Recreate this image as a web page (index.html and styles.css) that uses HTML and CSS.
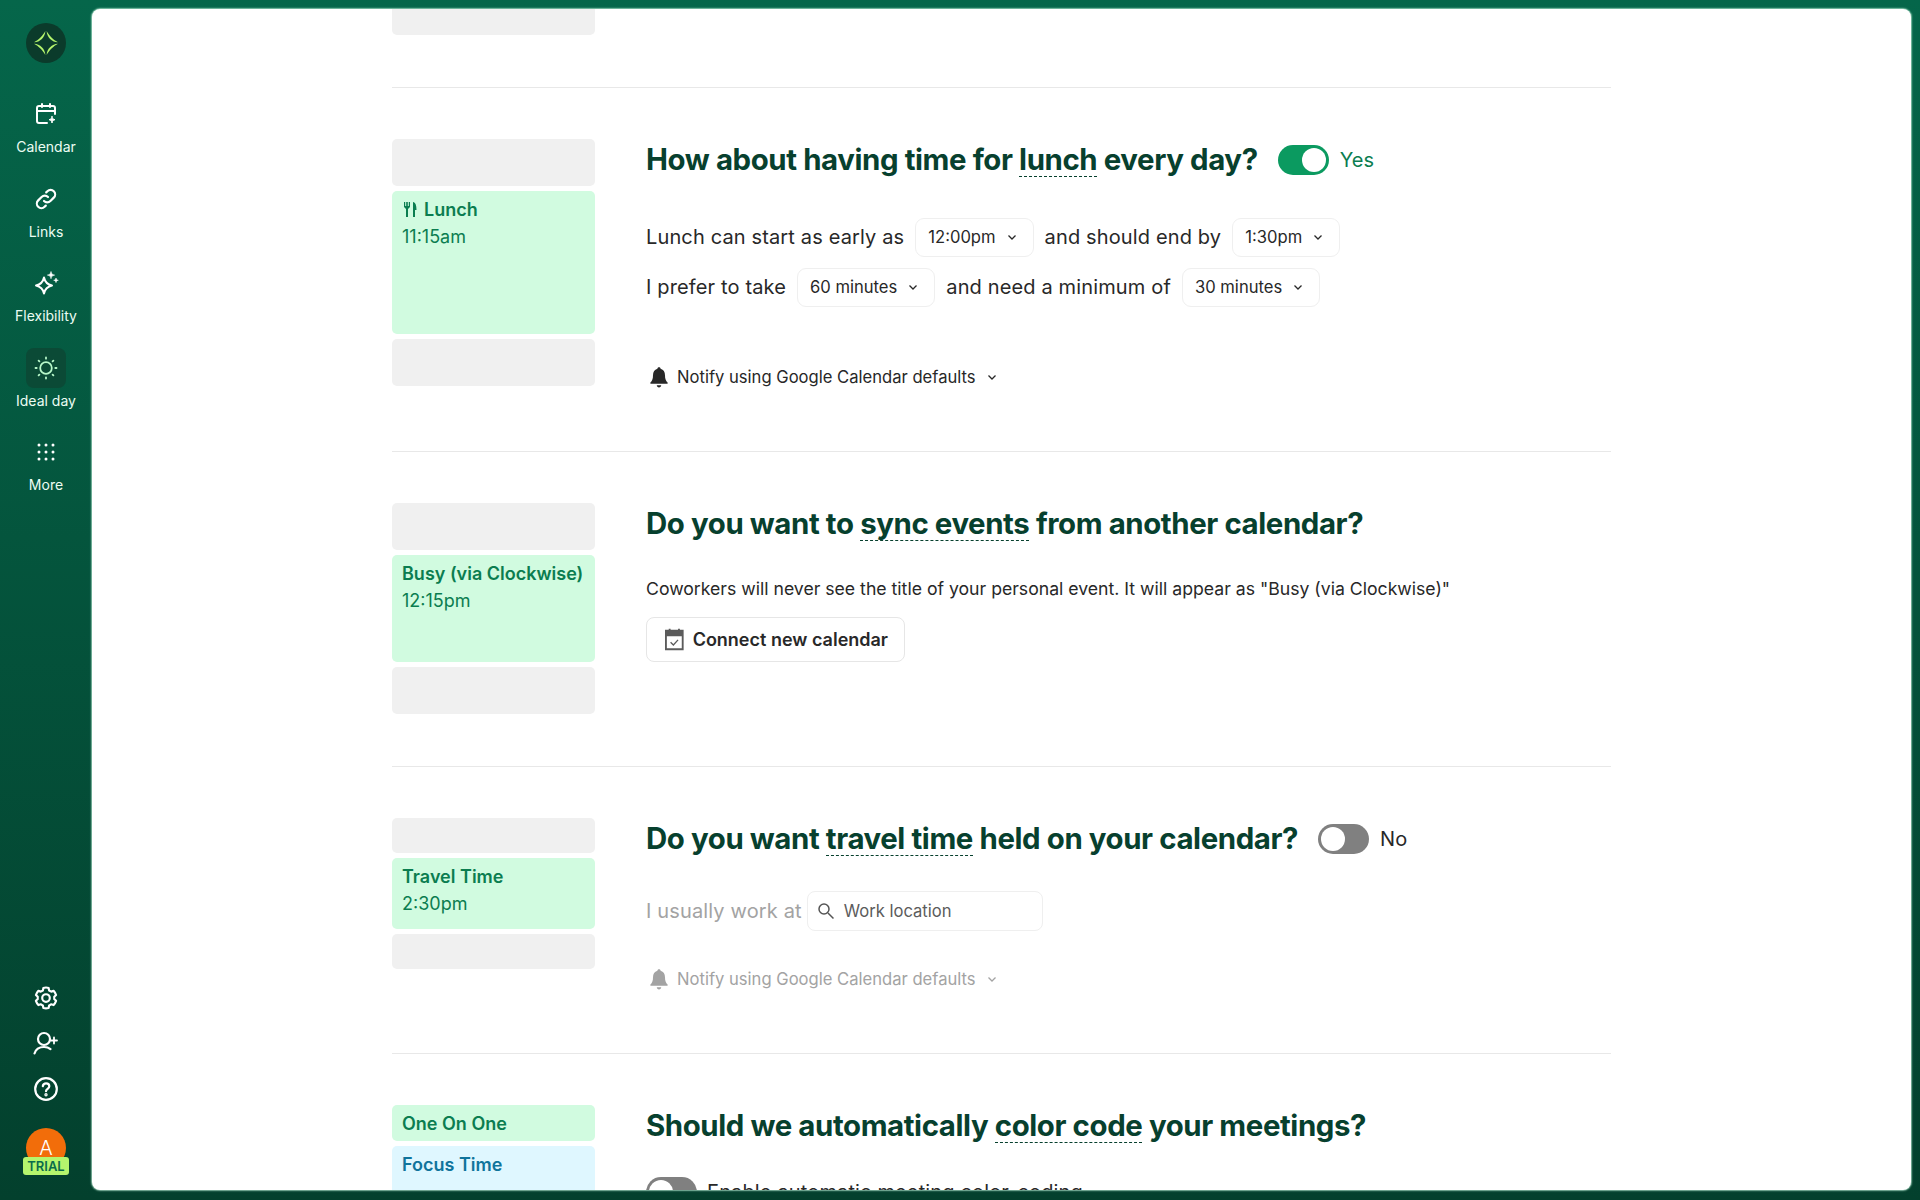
FILE: index.html
```html
<!DOCTYPE html>
<html lang="en">
<head>
<meta charset="utf-8">
<title>Ideal day</title>
<link rel="stylesheet" href="styles.css">
</head>
<body>
<svg class="defs" width="0" height="0" aria-hidden="true">
  <symbol id="chev" viewBox="0 0 12 12"><path d="M2.5 4.5 6 8l3.5-3.5" fill="none" stroke="currentColor" stroke-width="1.3"/></symbol>
  <symbol id="bell" viewBox="0 0 20 24"><path d="M10 2.2c1 0 1.6.7 1.6 1.6 3 .8 4.4 3.3 4.4 6.4 0 3.600.8 5.600 2.600 7.200v1.400H1.400v-1.400C3.200 15.800 4 13.800 4 10.200c0-3.100 1.400-5.600 4.400-6.400 0-.9.600-1.600 1.600-1.600ZM7.800 20.200h4.400c0 1.300-1 2.200-2.200 2.200s-2.200-.9-2.200-2.200Z" fill="currentColor"/></symbol>
</svg>
<div class="app">
  <aside class="sidebar">
    <div class="logo">
      <svg width="26" height="26" viewBox="0 0 26 26" fill="#b5f56d"><path d="M13.700 1C16 5.500 20.500 10 25 12.300 19 12.300 13.700 7 13.700 1Z"/><path d="M25 13.700C20.500 16 16 20.500 13.700 25 13.700 19 19 13.700 25 13.700Z"/><path d="M12.300 25C10 20.500 5.500 16 1 13.700 7 13.700 12.300 19 12.300 25Z"/><path d="M1 12.300C5.500 10 10 5.500 12.300 1 12.300 7 7 12.300 1 12.300Z"/></svg>
    </div>
    <nav class="nav">
      <a class="nav-item">
        <span class="nav-icon"><svg width="24" height="24" viewBox="0 0 24 24" fill="none" stroke="#fff" stroke-width="2" stroke-linecap="round" stroke-linejoin="round"><path d="M13 21H5a2 2 0 0 1-2-2V6a2 2 0 0 1 2-2h14a2 2 0 0 1 2 2v6"/><path d="M3 9h18M8 2v3M16 2v3"/><path d="M18 14.500c.3 2 1 2.800 3 3.200-2 .4-2.700 1.200-3 3.300-.3-2.100-1-2.900-3-3.300 2-.4 2.700-1.200 3-3.200Z" fill="#fff" stroke-width="1"/></svg></span>
        <span class="nav-label">Calendar</span>
      </a>
      <a class="nav-item">
        <span class="nav-icon"><svg width="24" height="24" viewBox="0 0 24 24" fill="none" stroke="#fff" stroke-width="2.200" stroke-linecap="round" stroke-linejoin="round"><path d="M10 14a4.500 4.500 0 0 0 6.400 0l3.400-3.400a4.500 4.500 0 0 0-6.400-6.400l-1.200 1.200"/><path d="M14 10a4.500 4.500 0 0 0-6.400 0l-3.400 3.400a4.500 4.500 0 0 0 6.400 6.400l1.200-1.200"/></svg></span>
        <span class="nav-label">Links</span>
      </a>
      <a class="nav-item">
        <span class="nav-icon"><svg width="26" height="26" viewBox="0 0 26 26" fill="none" stroke="#fff" stroke-width="2" stroke-linejoin="round"><path d="M11 7.500c1 4.700 3.300 7 8 8-4.700 1-7 3.300-8 8-1-4.700-3.300-7-8-8 4.700-1 7-3.300 8-8Z"/><path d="M18 1.500c.4 2.400 1.200 3.200 3.600 3.600-2.400.4-3.200 1.200-3.600 3.600-.4-2.400-1.200-3.200-3.600-3.600 2.400-.4 3.200-1.200 3.600-3.600ZM23 8c.3 1.500.8 2 2.300 2.300-1.500.3-2 .8-2.300 2.300-.3-1.500-.8-2-2.300-2.300 1.500-.3 2-.8 2.300-2.300Z" fill="#fff" stroke="#fff" stroke-width=".6"/></svg></span>
        <span class="nav-label">Flexibility</span>
      </a>
      <a class="nav-item">
        <span class="nav-icon nav-icon-active"><svg width="26" height="26" viewBox="0 0 26 26" fill="none" stroke="#b7f7c9" stroke-width="1.800" stroke-linecap="round"><circle cx="13" cy="13" r="5.800"/><path d="M13 2.500v1.200M13 22.300v1.200M2.500 13h1.200M22.300 13h1.200M5.600 5.600l.8.8M19.600 19.600l.8.8M5.600 20.400l.8-.8M19.600 6.400l.8-.8"/></svg></span>
        <span class="nav-label">Ideal day</span>
      </a>
      <a class="nav-item">
        <span class="nav-icon"><svg width="20" height="20" viewBox="0 0 20 20" fill="#fff"><circle cx="3" cy="3" r="1.500"/><circle cx="10" cy="3" r="1.500"/><circle cx="17" cy="3" r="1.500"/><circle cx="3" cy="10" r="1.500"/><circle cx="10" cy="10" r="1.500"/><circle cx="17" cy="10" r="1.500"/><circle cx="3" cy="17" r="1.500"/><circle cx="10" cy="17" r="1.500"/><circle cx="17" cy="17" r="1.500"/></svg></span>
        <span class="nav-label">More</span>
      </a>
    </nav>
    <div class="side-bottom">
      <svg class="side-tool" width="26" height="26" viewBox="0 0 24 24" fill="none" stroke="#fff" stroke-width="2" stroke-linejoin="round"><circle cx="12" cy="12" r="3.500"/><path d="M12 2.300c.9 0 1.700.1 2.400.4l.5 2.300c.7.300 1.300.6 1.800 1.100l2.300-.7c1 1.100 1.800 2.500 2.300 3.900l-1.700 1.600c.1.700.1 1.400 0 2.100l1.700 1.600c-.5 1.400-1.300 2.800-2.300 3.900l-2.300-.7c-.5.500-1.100.8-1.800 1.100l-.5 2.300c-1.500.4-3.300.4-4.800 0l-.5-2.300c-.7-.3-1.300-.6-1.800-1.100l-2.300.7c-1-1.100-1.800-2.500-2.300-3.900l1.700-1.600c-.1-.7-.1-1.400 0-2.100L2.700 9.300c.5-1.400 1.300-2.800 2.300-3.900l2.300.7c.5-.5 1.100-.8 1.800-1.100l.5-2.300c.7-.3 1.500-.4 2.400-.4Z"/></svg>
      <svg class="side-tool" width="26" height="26" viewBox="0 0 26 26" fill="none" stroke="#fff" stroke-width="2.200" stroke-linecap="round"><circle cx="11" cy="9" r="6"/><path d="M1.500 23.500c1.200-4.200 4.700-6.500 9.500-6.500 2.600 0 4.800.7 6.500 2.100"/><path d="M21 7.500v6M18 10.500h6" stroke-width="1.800"/></svg>
      <svg class="side-tool" width="26" height="26" viewBox="0 0 26 26" fill="none" stroke="#fff" stroke-width="2.200" stroke-linecap="round"><circle cx="13" cy="13" r="10.800"/><path d="M9.800 10.200c.3-1.800 1.600-2.800 3.300-2.800 1.900 0 3.200 1.200 3.200 2.800 0 2.500-3.300 2.600-3.300 5"/><circle cx="13" cy="18.800" r=".6" fill="#fff"/></svg>
      <div class="avatar">
        <span class="avatar-letter">A</span>
        <span class="trial">TRIAL</span>
      </div>
    </div>
  </aside>

  <main class="panel">
    <section class="section section-clip">
      <div class="cal"><div class="slot slot-top"></div></div>
    </section>

    <section class="section">
      <div class="cal">
        <div class="slot slot-47"></div>
        <div class="event event-lunch">
          <div class="event-title">
            <svg class="fork" width="13" height="15" viewBox="0 0 13 15" fill="currentColor"><path d="M0 0h1.200v4h1V0h1.600v4h1V0H6v5L4 7v8H2V7L0 5ZM9 0c2.500.5 3.500 3 3.500 8H11v7H9Z"/></svg>
            Lunch
          </div>
          <div class="event-time">11:15am</div>
        </div>
        <div class="slot slot-47"></div>
      </div>
      <div class="detail">
        <div class="heading-row">
          <h2 class="heading">How about having time for <span class="dotted">lunch</span> every day?</h2>
          <span class="toggle toggle-on"><span class="knob"></span></span>
          <span class="toggle-label toggle-label-on">Yes</span>
        </div>
        <div class="line line-first">
          <span>Lunch can start as early as</span>
          <span class="pill">12:00pm <svg class="chev"><use href="#chev"/></svg></span>
          <span>and should end by</span>
          <span class="pill">1:30pm <svg class="chev"><use href="#chev"/></svg></span>
        </div>
        <div class="line line-second">
          <span>I prefer to take</span>
          <span class="pill">60 minutes <svg class="chev"><use href="#chev"/></svg></span>
          <span>and need a minimum of</span>
          <span class="pill">30 minutes <svg class="chev"><use href="#chev"/></svg></span>
        </div>
        <div class="notify notify-lunch">
          <svg class="bell"><use href="#bell"/></svg>
          <span>Notify using Google Calendar defaults</span>
          <svg class="chev"><use href="#chev"/></svg>
        </div>
      </div>
    </section>

    <section class="section">
      <div class="cal">
        <div class="slot slot-47"></div>
        <div class="event event-busy">
          <div class="event-title">Busy (via Clockwise)</div>
          <div class="event-time">12:15pm</div>
        </div>
        <div class="slot slot-47"></div>
      </div>
      <div class="detail">
        <div class="heading-row">
          <h2 class="heading">Do you want to <span class="dotted">sync events</span> from another calendar?</h2>
        </div>
        <p class="note">Coworkers will never see the title of your personal event. It will appear as "Busy (via Clockwise)"</p>
        <button class="connect" type="button">
          <svg width="20" height="24" viewBox="0 0 20 24"><path d="M1 3h18v20H1Z" fill="none" stroke="#5b5b5b" stroke-width="2"/><path d="M1 3h18v6H1ZM4 1h2v3H4ZM14 1h2v3h-2Z" fill="#5b5b5b"/><path d="M6 15.500 9 18.500 14 13" fill="none" stroke="#5b5b5b" stroke-width="1.400"/></svg>
          Connect new calendar
        </button>
      </div>
    </section>

    <section class="section">
      <div class="cal">
        <div class="slot slot-35"></div>
        <div class="event event-travel">
          <div class="event-title">Travel Time</div>
          <div class="event-time">2:30pm</div>
        </div>
        <div class="slot slot-35"></div>
      </div>
      <div class="detail">
        <div class="heading-row">
          <h2 class="heading">Do you want <span class="dotted">travel time</span> held on your calendar?</h2>
          <span class="toggle toggle-off"><span class="knob"></span></span>
          <span class="toggle-label">No</span>
        </div>
        <div class="line line-travel">
          <span class="muted">I usually work at</span>
          <span class="search">
            <svg width="18" height="18" viewBox="0 0 18 18" fill="none" stroke="#555" stroke-width="1.500"><circle cx="7" cy="7" r="5"/><path d="m11 11 5.500 5.500"/></svg>
            Work location
          </span>
        </div>
        <div class="notify notify-off">
          <svg class="bell"><use href="#bell"/></svg>
          <span>Notify using Google Calendar defaults</span>
          <svg class="chev"><use href="#chev"/></svg>
        </div>
      </div>
    </section>

    <section class="section">
      <div class="cal">
        <div class="event event-one">
          <div class="event-title">One On One</div>
        </div>
        <div class="event event-focus">
          <div class="event-title">Focus Time</div>
        </div>
      </div>
      <div class="detail">
        <div class="heading-row">
          <h2 class="heading">Should we automatically <span class="dotted">color code</span> your meetings?</h2>
        </div>
        <div class="color-line">
          <span class="toggle toggle-off"><span class="knob"></span></span>
          <span>Enable automatic meeting color-coding</span>
        </div>
      </div>
    </section>
  </main>
</div>
</body>
</html>
```
FILE: styles.css
```css
* { box-sizing: border-box; }
html, body { margin: 0; height: 100%; }
body {
  font-family: Inter, "Liberation Sans", sans-serif;
  color: #282828;
  background: linear-gradient(180deg, #05664a 0%, #03402d 100%);
  overflow: hidden;
}
.defs { position: absolute; }
.app { display: flex; height: 1200px; }

.sidebar {
  width: 92px;
  flex: none;
  display: flex;
  flex-direction: column;
  align-items: center;
  padding: 23px 0 32px;
}
.logo {
  width: 40px;
  height: 40px;
  border-radius: 50%;
  background: #0b3b2b;
  display: flex;
  align-items: center;
  justify-content: center;
}
.nav { display: flex; flex-direction: column; gap: 21.5px; margin-top: 31px; }
.nav-item { display: flex; flex-direction: column; align-items: center; gap: 3px; }
.nav-icon {
  width: 40px;
  height: 40px;
  border-radius: 8px;
  display: flex;
  align-items: center;
  justify-content: center;
}
.nav-icon-active { background: #0b4a36; }
.nav-label { font-size: 14px; line-height: 20px; color: #ecfdf3; }
.side-bottom {
  margin-top: auto;
  display: flex;
  flex-direction: column;
  align-items: center;
  gap: 19.5px;
}
.side-tool { display: block; }
.avatar {
  width: 40px;
  height: 40px;
  margin-top: 7px;
  border-radius: 50%;
  background: #f26d0a;
  display: flex;
  justify-content: center;
  position: relative;
}
.avatar-letter { font-size: 20px; line-height: 40px; color: #fff; font-weight: 300; }
.trial {
  position: absolute;
  left: -3px;
  top: 29px;
  width: 46px;
  height: 18px;
  border-radius: 3px;
  background: #b5f56d;
  color: #0a6b4b;
  font-size: 13px;
  font-weight: 600;
  line-height: 18px;
  text-align: center;
}

.panel {
  flex: 1;
  margin: 9px 9px 10px 0;
  background: #fff;
  border-radius: 8px;
  box-shadow: 0 0 1.5px 1px rgba(190, 240, 215, .7);
  overflow: hidden;
}
.section {
  display: flex;
  gap: 51px;
  width: 1219px;
  margin-left: 300px;
  padding: 51px 0 52px;
  border-bottom: 1px solid #e8e8e8;
}
.section-clip { padding-top: 0; }
.cal { width: 203px; flex: none; display: flex; flex-direction: column; gap: 5px; }
.slot { background: #f0f0f0; border-radius: 5px; }
.slot-top { height: 25.500px; border-radius: 0 0 5px 5px; }
.slot-47 { height: 47px; }
.slot-35 { height: 35px; }

.event {
  background: #d1fbe0;
  border-radius: 5px;
  padding: 5px 10px;
  color: #0b7d50;
  font-size: 18px;
  line-height: 27px;
}
.event-title { font-weight: 600; display: flex; align-items: center; gap: 7px; }
.event-lunch { height: 143px; }
.event-busy { height: 107px; }
.event-travel { height: 71px; }
.event-one { height: 36px; }
.event-focus { height: 90px; background: #dff7ff; color: #0f749c; }
.fork { margin-left: 2px; }

.detail { flex: 1; padding-bottom: 10px; min-width: 0; }
.heading-row { display: flex; align-items: center; height: 42px; }
.heading {
  margin: 0;
  font-size: 29.400px;
  line-height: 42px;
  font-weight: 700;
  letter-spacing: -.4px;
  color: #07402e;
  white-space: nowrap;
}
.dotted { border-bottom: 1.500px dashed #07402e; line-height: 32px; display: inline-block; }
.toggle {
  width: 51px;
  height: 30px;
  border-radius: 15px;
  flex: none;
  padding: 3px;
  display: flex;
  margin-left: 20px;
}
.toggle-on { background: #0b9a60; justify-content: flex-end; }
.toggle-off { background: #808080; justify-content: flex-start; }
.knob { width: 24px; height: 24px; border-radius: 50%; background: #fff; }
.toggle-label { font-size: 20px; margin-left: 11px; color: #282828; }
.toggle-label-on { color: #0b7d50; }

.line { display: flex; align-items: center; gap: 11px; font-size: 20px; letter-spacing: .14px; }
.line-first { margin-top: 37px; }
.line-second { margin-top: 11px; }
.line-travel { margin-top: 31px; gap: 5px; }
.pill {
  height: 39px;
  padding: 0 15px 0 12px;
  border: 1px solid #efefef;
  border-radius: 9px;
  font-size: 16.600px;
  letter-spacing: 0;
  display: inline-flex;
  align-items: center;
  gap: 10px;
}
.chev { width: 12px; height: 12px; flex: none; }
.notify {
  display: flex;
  align-items: center;
  gap: 8px;
  height: 24px;
  font-size: 16.600px;
  margin-left: 3px;
}
.notify .chev { margin-left: 2px; }
.bell { width: 20px; height: 24px; flex: none; }
.notify-lunch { margin-top: 58px; }
.notify-off { margin-top: 36px; color: #a3a3a3; }
.muted { color: #a3a3a3; }
.search {
  width: 236px;
  height: 40px;
  border: 1px solid #efefef;
  border-radius: 8px;
  padding: 0 9px;
  font-size: 16.600px;
  letter-spacing: 0;
  color: #5c5c5c;
  display: flex;
  align-items: center;
  gap: 9px;
}
.note { margin: 30px 0 14px; font-size: 17.650px; line-height: 28px; }
.connect {
  height: 45px;
  width: 259px;
  padding: 0 16px 0 18px;
  border: 1px solid #e6e6e6;
  border-radius: 8px;
  background: #fff;
  color: #282828;
  font: 600 18px Inter, sans-serif;
  display: flex;
  align-items: center;
  gap: 9px;
  white-space: nowrap;
}
.color-line { display: flex; align-items: center; gap: 10px; margin-top: 30px; font-size: 20px; letter-spacing: .14px; }
.color-line .toggle { margin-left: 0; }
```
